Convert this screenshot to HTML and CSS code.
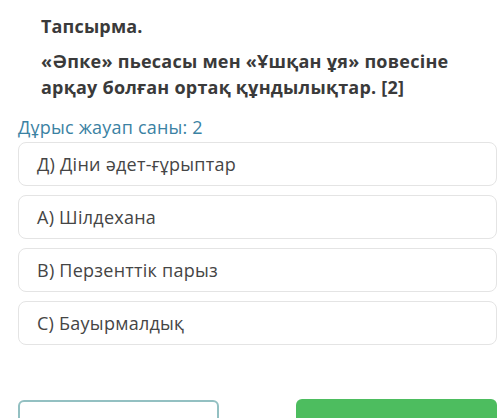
FILE: index.html
```html
<!DOCTYPE html>
<html lang="kk">
<head>
    <meta charset="UTF-8">
    <meta name="viewport" content="width=device-width, initial-scale=1.0">
    <title>Тапсырма</title>
    <link rel="stylesheet" href="styles.css">
</head>
<body>
    <div class="task">
        <div class="task-head">
            <h2>Тапсырма.</h2>
            <p class="question">«Әпке» пьесасы мен «Ұшқан ұя» повесіне арқау болған ортақ құндылықтар. [2]</p>
        </div>

        <div class="answer-count">Дұрыс жауап саны: 2</div>

        <div class="options">
            <div class="option">Д) Діни әдет-ғұрыптар</div>
            <div class="option">А) Шілдехана</div>
            <div class="option">В) Перзенттік парыз</div>
            <div class="option">С) Бауырмалдық</div>
        </div>

        <div class="actions">
            <button class="btn btn-outline" type="button"></button>
            <button class="btn btn-green" type="button"></button>
        </div>
    </div>
</body>
</html>
```

FILE: styles.css
```css
body {
    font-family: "Open Sans", "Noto Sans", Arial, sans-serif;
    background-color: #fff;
    margin: 0;
    padding: 0;
    overflow: hidden;
}
.task {
    padding: 14px 3px 0 18px;
}
.task-head {
    padding-left: 23px;
    color: #3a3a3a;
}
h2 {
    font-size: 18px;
    line-height: 24px;
    font-weight: 700;
    letter-spacing: 0.15px;
    margin: 0 0 10px;
}
.question {
    font-size: 18px;
    line-height: 26px;
    font-weight: 700;
    letter-spacing: 0.24px;
    margin: 0;
}
.answer-count {
    margin-top: 16px;
    font-size: 18px;
    line-height: 22px;
    letter-spacing: 0.2px;
    color: #3b82a3;
}
.options {
    margin-top: 4px;
}
.option {
    height: 22px;
    padding: 10px 18px;
    margin-bottom: 9px;
    border: 1px solid #e4e4e4;
    border-radius: 8px;
    font-size: 18px;
    line-height: 22px;
    letter-spacing: 0.25px;
    color: #454545;
}
.actions {
    display: flex;
    justify-content: space-between;
    margin-top: 55px;
}
.btn {
    width: 201px;
    height: 40px;
    border-radius: 6px;
    cursor: pointer;
}
.btn-outline {
    background-color: #fff;
    border: 2px solid #93c0c2;
}
.btn-green {
    background-color: #4dbd5f;
    border: none;
    margin-top: -1px;
}
```
